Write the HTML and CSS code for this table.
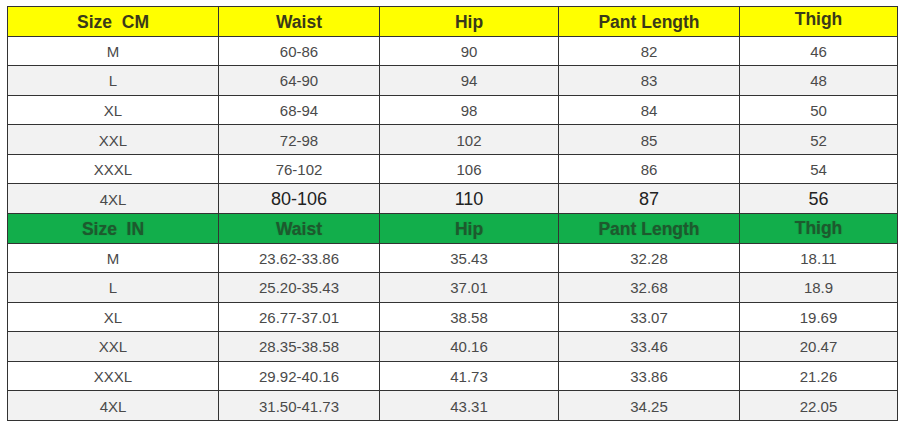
FILE: index.html
```html
<!DOCTYPE html>
<html>
<head>
<meta charset="utf-8">
<link rel="stylesheet" href="styles.css">
</head>
<body>
<table class="size-table">
  <colgroup>
    <col class="c1"><col class="c2"><col class="c3"><col class="c4"><col class="c5">
  </colgroup>
  <tr class="head yellow">
    <th>Size&nbsp; CM</th><th>Waist</th><th>Hip</th><th>Pant Length</th><th class="thigh">Thigh</th>
  </tr>
  <tr><td>M</td><td>60-86</td><td>90</td><td>82</td><td>46</td></tr>
  <tr class="alt"><td>L</td><td>64-90</td><td>94</td><td>83</td><td>48</td></tr>
  <tr><td>XL</td><td>68-94</td><td>98</td><td>84</td><td>50</td></tr>
  <tr class="alt"><td>XXL</td><td>72-98</td><td>102</td><td>85</td><td>52</td></tr>
  <tr><td>XXXL</td><td>76-102</td><td>106</td><td>86</td><td>54</td></tr>
  <tr class="alt big"><td class="label">4XL</td><td>80-106</td><td>110</td><td>87</td><td>56</td></tr>
  <tr class="head green">
    <th>Size&nbsp; IN</th><th>Waist</th><th>Hip</th><th>Pant Length</th><th class="thigh">Thigh</th>
  </tr>
  <tr><td>M</td><td>23.62-33.86</td><td>35.43</td><td>32.28</td><td>18.11</td></tr>
  <tr class="alt"><td>L</td><td>25.20-35.43</td><td>37.01</td><td>32.68</td><td>18.9</td></tr>
  <tr><td>XL</td><td>26.77-37.01</td><td>38.58</td><td>33.07</td><td>19.69</td></tr>
  <tr class="alt"><td>XXL</td><td>28.35-38.58</td><td>40.16</td><td>33.46</td><td>20.47</td></tr>
  <tr><td>XXXL</td><td>29.92-40.16</td><td>41.73</td><td>33.86</td><td>21.26</td></tr>
  <tr class="alt"><td>4XL</td><td>31.50-41.73</td><td>43.31</td><td>34.25</td><td>22.05</td></tr>
</table>
</body>
</html>
```
FILE: styles.css
```css
html, body {
  margin: 0;
  padding: 0;
  background: #ffffff;
}
body {
  padding: 6px 0 0 7px;
  font-family: "Liberation Sans", Arial, sans-serif;
}
.size-table {
  border-collapse: collapse;
  table-layout: fixed;
  width: 890px;
  border: 1.5px solid #333;
}
.c1 { width: 211px; }
.c2 { width: 161px; }
.c3 { width: 179px; }
.c4 { width: 181px; }
.c5 { width: 158px; }
.size-table tr {
  height: 29.57px;
}
.size-table td,
.size-table th {
  border: 1.5px solid #333;
  padding: 0;
  text-align: center;
  vertical-align: middle;
  line-height: 1;
}
.size-table td {
  font-size: 15px;
  color: #4a4a4a;
  padding-top: 1px;
}
.alt td {
  background: #f2f2f2;
}
.big td {
  font-size: 18px;
  color: #222;
}
.big td.label {
  font-size: 15px;
  color: #4a4a4a;
}
.head th {
  font-size: 17.5px;
  font-weight: bold;
  padding-top: 3px;
}
.yellow th.thigh {
  padding-top: 0;
  padding-bottom: 4px;
}
.green th.thigh {
  padding-top: 1px;
}
.yellow th {
  background: #ffff00;
  color: #3a3a1a;
}
.green th {
  background: #12ae4b;
  color: #1d5a2e;
  text-shadow: 0 0 1px rgba(29, 90, 46, 0.6);
}
```
